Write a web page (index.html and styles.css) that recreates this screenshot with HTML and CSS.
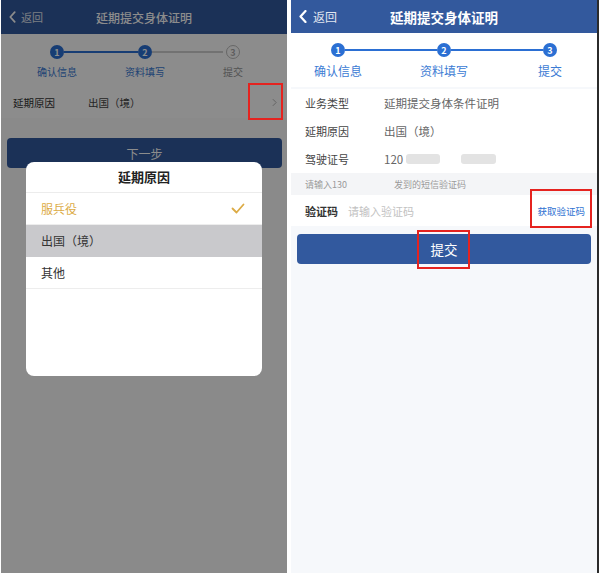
FILE: index.html
```html
<!DOCTYPE html>
<html lang="zh-CN">
<head>
<meta charset="utf-8">
<title>延期提交身体证明</title>
<link rel="stylesheet" href="styles.css">
</head>
<body>
<div class="screens">
  <section class="phone phone-left">
    <header class="nav nav-left">
      <div class="back">
        <svg class="back-ic" viewBox="0 0 8 13" width="7" height="12"><polyline points="6.5,1 1.5,6.5 6.5,12" fill="none" stroke="#fff" stroke-width="2" stroke-linecap="round" stroke-linejoin="round"/></svg>
        <span>返回</span>
      </div>
      <div class="title">延期提交身体证明</div>
      <div></div>
    </header>
    <div class="steps steps-left">
      <span class="dot on">1</span><span class="bar on"></span><span class="dot on">2</span><span class="bar off"></span><span class="dot off">3</span>
      <span class="lbl c1 on">确认信息</span><span class="lbl c3 on">资料填写</span><span class="lbl c5 off">提交</span>
    </div>
    <div class="pick-row">
      <span class="k">延期原因</span>
      <span class="v">出国（境）</span>
      <svg class="chev" viewBox="0 0 6 10" width="5" height="9"><polyline points="1,1 5,5 1,9" fill="none" stroke="#b5b5b5" stroke-width="1.2"/></svg>
      <i class="mark mark-chev"></i>
    </div>
    <button class="btn btn-next">下一步</button>
    <div class="mask"></div>
    <div class="sheet">
      <div class="sheet-title">延期原因</div>
      <div class="opt sel"><span>服兵役</span>
        <svg viewBox="0 0 14 11" width="14" height="11"><polyline points="1.5,5.5 5.5,9.5 12.5,1.5" fill="none" stroke="#dcab45" stroke-width="1.8" stroke-linecap="round" stroke-linejoin="round"/></svg>
      </div>
      <div class="opt hl"><span>出国（境）</span></div>
      <div class="opt"><span>其他</span></div>
    </div>
  </section>

  <section class="phone phone-right">
    <header class="nav nav-right">
      <div class="back">
        <svg class="back-ic" viewBox="0 0 8 13" width="8" height="13"><polyline points="6.5,1 1.5,6.5 6.5,12" fill="none" stroke="#fff" stroke-width="2.2" stroke-linecap="round" stroke-linejoin="round"/></svg>
        <span>返回</span>
      </div>
      <div class="title">延期提交身体证明</div>
      <div></div>
    </header>
    <div class="steps steps-right">
      <span class="dot on">1</span><span class="bar on"></span><span class="dot on">2</span><span class="bar on"></span><span class="dot on">3</span>
      <span class="lbl c1 on">确认信息</span><span class="lbl c3 on">资料填写</span><span class="lbl c5 on">提交</span>
    </div>
    <div class="info">
      <div class="row"><span class="k">业务类型</span><span class="v">延期提交身体条件证明</span></div>
      <div class="row"><span class="k">延期原因</span><span class="v">出国（境）</span></div>
      <div class="row"><span class="k">驾驶证号</span><span class="v">120<i class="blur b1"></i><i class="blur b2"></i></span></div>
    </div>
    <div class="hint">请输入130<span class="gap"></span>发到的短信验证码</div>
    <div class="code-row">
      <span class="ck">验证码</span>
      <span class="ph">请输入验证码</span>
      <span class="get">获取验证码<i class="mark mark-get"></i></span>
    </div>
    <div class="submit-wrap">
      <button class="btn btn-submit">提交<i class="mark mark-submit"></i></button>
    </div>
  </section>
</div>
</body>
</html>
```
FILE: styles.css
```css
* { box-sizing: border-box; }
body {
  margin: 0;
  background: #fff;
  font-family: "Noto Sans CJK SC", "Noto Sans", sans-serif;
}
.screens {
  display: flex;
  gap: 4px;
  padding-left: 1px;
  height: 573px;
}
.phone {
  position: relative;
  overflow: hidden;
  display: flex;
  flex-direction: column;
}
.phone-left { width: 286px; background: #fbfbfb; }
.phone-right { width: 308px; background: #f6f8fb; border-right: 2px solid #2b2b2b; }

/* nav */
.nav {
  display: grid;
  grid-template-columns: 1fr auto 1fr;
  align-items: center;
  background: #32599e;
  color: #fff;
  flex: none;
}
.nav-left { height: 34px; }
.nav-right { height: 33px; background: #33599d; }
.back { display: flex; align-items: center; gap: 5px; padding-left: 8px; }
.nav-left .back { font-size: 11px; }
.nav-right .back { font-size: 12px; gap: 6px; padding-left: 8px; }
.back span { opacity: .85; }
.title { white-space: nowrap; }
.nav-left .title { font-size: 12px; font-weight: 500; }
.nav-right .title { font-size: 13.5px; font-weight: 700; }

/* steps */
.steps {
  display: grid;
  grid-template-columns: 14px 1fr 14px 1fr 14px;
  align-items: center;
  row-gap: 6px;
  background: #fff;
  flex: none;
}
.steps-left { padding: 11px 47px 7px 49px; }
.steps-right { padding: 10px 40px 8px 40px; }
.dot {
  width: 14px; height: 14px; border-radius: 50%;
  display: flex; align-items: center; justify-content: center;
  font-size: 9px; font-weight: 700; line-height: 1;
}
.dot.on { background: #2b6fd3; color: #fff; }
.dot.off { background: #fff; color: #aaa; border: 1px solid #bbb; }
.bar { height: 2px; }
.bar.on { background: #2b6fd3; }
.bar.off { background: #cfcfcf; margin-right: 3px; }
.lbl {
  grid-row: 2;
  display: flex; justify-content: center;
  white-space: nowrap;
  width: 14px;
}
.c1 { grid-column: 1; }
.c3 { grid-column: 3; }
.c5 { grid-column: 5; }
.steps-left .lbl { font-size: 10px; line-height: 14px; }
.steps-right .lbl { font-size: 12px; line-height: 16px; }
.lbl.on { color: #3b7bd4; }
.lbl.off { color: #999; }

/* left picker row */
.pick-row {
  position: relative;
  height: 32px;
  display: flex;
  align-items: center;
  padding: 0 10px 0 12px;
  background: #fff;
  font-size: 10.5px;
  color: #333;
}
.pick-row .k { width: 75px; }
.pick-row .v { flex: 1; color: #444; }

.btn {
  border: 0;
  font-family: inherit;
  color: #fff;
  border-radius: 4px;
  background: #32599e;
  padding: 0;
}
.btn-next {
  margin: 20px 5px 0 6px;
  height: 30px;
  font-size: 12px;
}

.mask {
  position: absolute;
  inset: 0;
  background: rgba(0, 0, 0, .45);
  z-index: 1;
}
.sheet {
  position: absolute;
  left: 25px; top: 162px;
  width: 236px; height: 214px;
  background: #fff;
  border-radius: 8px;
  overflow: hidden;
  z-index: 2;
}
.sheet-title {
  height: 31px;
  line-height: 30px;
  text-align: center;
  font-size: 13px;
  font-weight: 700;
  color: #222;
  border-bottom: 1px solid #ececec;
}
.opt {
  height: 32px;
  display: flex;
  align-items: center;
  justify-content: space-between;
  padding: 0 17px 0 15px;
  font-size: 12px;
  color: #333;
  border-bottom: 1px solid #ededed;
}
.opt.sel { color: #dcab45; }
.opt.hl { background: #c9c9cc; border-bottom-color: #c9c9cc; }

/* red annotation boxes */
.mark {
  position: absolute;
  border: 2px solid #e5231f;
  z-index: 3;
  pointer-events: none;
}
.mark-chev { right: 4px; top: -3px; width: 35px; height: 37px; }

/* right info */
.info {
  margin-top: 2px;
  background: #fff;
  padding: 0 14px;
  flex: none;
}
.row {
  height: 28px;
  display: flex;
  align-items: center;
  font-size: 11px;
}
.row .k { width: 79px; color: #444; }
.row .v { color: #666; font-size: 11.5px; display: flex; align-items: center; }
.blur {
  display: inline-block;
  height: 10px;
  background: #e3e3e3;
  border-radius: 3px;
}
.b1 { width: 34px; margin-left: 3px; }
.b2 { width: 35px; margin-left: 21px; }

.hint {
  height: 22px;
  line-height: 24px;
  padding-left: 14px;
  font-size: 9px;
  color: #9a9a9a;
  background: #f4f5f7;
  flex: none;
}
.gap { display: inline-block; width: 47px; }

.code-row {
  height: 31px;
  display: flex;
  align-items: center;
  padding: 0 12px 0 14px;
  background: #fff;
  flex: none;
}
.ck { width: 43px; font-size: 11px; font-weight: 700; color: #333; }
.ph { flex: 1; font-size: 11px; color: #c2c2c2; }
.get { position: relative; font-size: 9.5px; color: #2f72d2; }
.mark-get { left: -7px; right: -7px; top: -15px; bottom: -10px; }

.submit-wrap { padding: 8px 6px 0 6px; flex: none; }
.btn-submit {
  position: relative;
  display: block;
  width: 100%;
  height: 30px;
  font-size: 13.5px;
  background: #32599e;
}
.mark-submit { left: calc(50% - 27px); top: -4px; width: 53px; height: 39px; }
```
